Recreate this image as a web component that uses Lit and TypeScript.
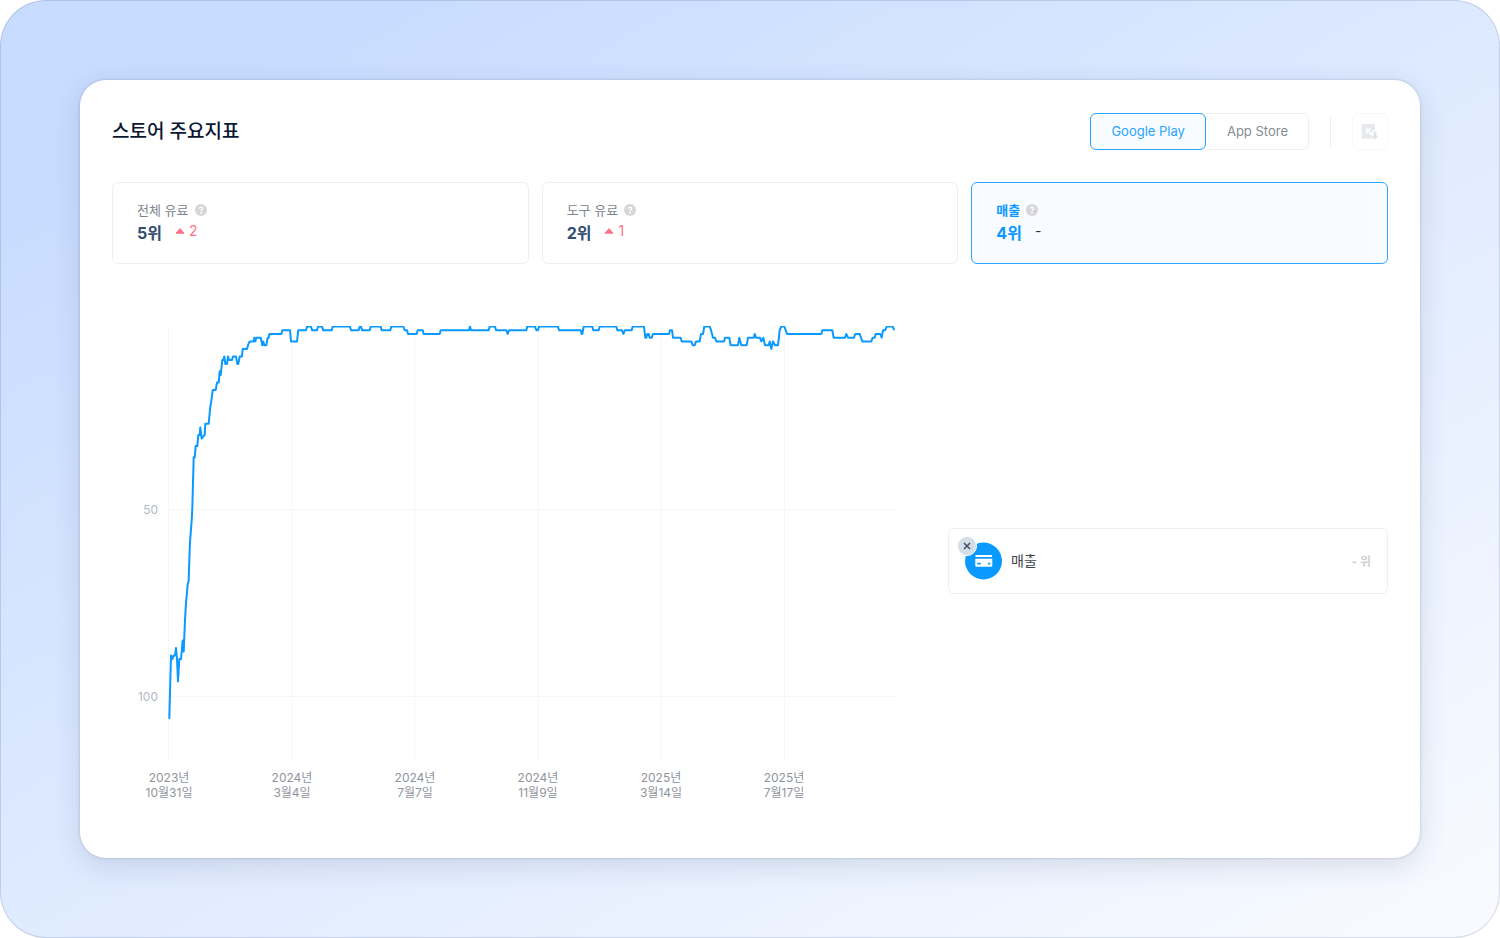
import { LitElement, html, css, svg, nothing } from "lit";
import { customElement, property, state } from "lit/decorators.js";
import { classMap } from "lit/directives/class-map.js";

interface Metric {
  id: string;
  label: string;
  rank: number;
  change: number;
}

const METRICS: Metric[] = [
  { id: "all-paid", label: "전체 유료", rank: 5, change: 2 },
  { id: "tool-paid", label: "도구 유료", rank: 2, change: 1 },
  { id: "revenue", label: "매출", rank: 4, change: 0 },
];

const TICKS = [
  ["2023년", "10월31일"],
  ["2024년", "3월4일"],
  ["2024년", "7월7일"],
  ["2024년", "11월9일"],
  ["2025년", "3월14일"],
  ["2025년", "7월17일"],
];

// Pairs of horizontal position on the time axis and store rank.
const SERIES: number[] = [
  1.3, 106, 3, 89, 4.3, 90, 5.7, 89, 7, 89, 8, 87, 9, 90, 10, 96, 11.3, 90, 13, 90, 14, 87, 14.7, 85,
  15.7, 88, 16.3, 84, 17, 79.5, 18, 75, 19.7, 70, 20.7, 69, 21, 66, 22, 58.6, 23.7, 52.8, 24.3, 49.7,
  25.7, 36, 26.7, 36, 27.7, 33, 29.3, 33, 30.3, 30, 31.7, 30, 32.3, 28, 33.7, 31, 35, 30.5, 36.7, 30,
  37.3, 27, 40.7, 27, 42.3, 22.5, 43.3, 21, 44.7, 18, 47.7, 18, 49, 16, 50.7, 16, 51.7, 13, 52.7, 14,
  54.3, 10, 55.3, 10, 56.3, 9, 57.3, 11, 59, 11, 60, 9, 61, 10, 64, 10, 65, 9, 68, 9, 69.3, 11,
  70.3, 11, 71.7, 9, 74, 9, 74.7, 7, 79, 7, 80, 6, 81.7, 5, 85.7, 5, 86.3, 4, 87.3, 5, 88.3, 4,
  92.7, 4, 94.3, 6, 95.3, 5, 96.3, 6, 98.3, 6, 99.7, 4, 100.7, 4, 101.3, 3, 113.3, 3, 114.3, 2,
  122, 2, 123, 5, 129, 5, 130.3, 2, 138, 2, 139, 1, 143, 1, 144, 2, 149, 2, 150, 1, 154, 1, 155, 2,
  163.7, 2, 164.7, 1, 182, 1, 183, 2, 190.7, 2, 191.7, 1, 193, 1, 194, 2, 201.7, 2, 202.7, 1,
  212.7, 1, 213.7, 2, 222.3, 2, 223.3, 1, 235.3, 1, 236.7, 2, 239, 2, 240, 3, 248.7, 3, 249.7, 2,
  254.7, 2, 255.7, 3, 271.7, 3, 272.7, 2, 301, 2, 302, 1, 303, 2, 320.7, 2, 321.7, 1, 327, 1,
  328, 2, 338.3, 2, 339.7, 3, 341, 2, 358.3, 2, 359.3, 1, 367, 1, 368.3, 2, 370, 2, 371, 1, 390, 1,
  391, 2, 412.7, 2, 413.7, 3, 414.3, 3, 415.7, 1, 424.3, 1, 425.3, 2, 430.7, 2, 431.7, 1, 448.3, 1,
  449.3, 2, 454, 2, 455.3, 3, 457, 2, 463.7, 2, 464.7, 1, 476, 1, 477.3, 4, 478.3, 4, 479.3, 3,
  480.7, 3, 481.7, 4, 483.7, 4, 485, 3, 501, 3, 502, 2, 504, 2, 505, 4, 512.7, 4, 513.7, 5,
  523.3, 5, 524.7, 6, 526.7, 6, 528, 5, 531.7, 5, 533, 3, 535, 3, 536.3, 1, 541.7, 1, 543, 2,
  545, 4, 547, 4, 548.3, 5, 556, 5, 557, 4, 561.3, 4, 562.7, 6, 570, 6, 571.3, 4, 573.3, 6,
  578.7, 6, 580, 4, 585.7, 4, 586.7, 3, 588, 4, 592, 4, 593.3, 5, 595.3, 4, 597, 6, 600.7, 6,
  601.7, 5, 603.3, 7, 605, 5, 607, 6, 610, 6, 611.7, 2, 613.3, 1, 616.3, 1, 617.7, 2, 619, 3,
  653.3, 3, 654.3, 2, 664.3, 2, 665.7, 4, 677, 4, 678.3, 3, 680, 4, 686, 4, 687.3, 3, 691.7, 3,
  694.3, 5, 703.3, 5, 704.7, 4, 706.7, 4, 707.7, 3, 712.3, 3, 713.7, 4, 715, 2, 717.3, 2, 718.7, 1,
  724.7, 1, 726.3, 2,
];

const PLOT_W = 727;
const PLOT_H = 434;
const TICK_STEP = 123.2;
const rankToY = (rank: number) => 0.5 + (rank - 1) * 3.737;

@customElement("rank-chart")
export class RankChart extends LitElement {
  static styles = css`
    :host {
      display: block;
    }
    .chart {
      display: grid;
      grid-template-columns: 46px minmax(0, 1fr);
      column-gap: 10px;
      row-gap: 10px;
    }
    .y-axis {
      display: grid;
      grid-template-rows: 183fr 187fr 64fr;
      justify-items: end;
      align-items: end;
      font-size: 12px;
      color: #b4b8bf;
    }
    .y-label {
      height: 0;
      display: flex;
      align-items: center;
    }
    .plot {
      display: block;
      width: 100%;
      height: 434px;
      overflow: hidden;
    }
    .grid-line {
      stroke: #f5f6f8;
      stroke-width: 1;
      vector-effect: non-scaling-stroke;
    }
    .series {
      fill: none;
      stroke: #0a99ff;
      stroke-width: 2;
      stroke-linejoin: round;
      vector-effect: non-scaling-stroke;
    }
    .x-axis {
      grid-column: 2;
      display: grid;
      grid-template-columns: repeat(5, 123fr) 112fr;
      margin: 0;
      padding: 0;
      list-style: none;
    }
    .x-slot {
      min-width: 0;
    }
    .x-label {
      width: 2px;
      display: flex;
      flex-direction: column;
      align-items: center;
      font-size: 12px;
      line-height: 15px;
      white-space: nowrap;
      color: #8f949e;
    }
  `;

  render() {
    let d = "";
    for (let i = 0; i < SERIES.length; i += 2) {
      d += `${i ? "L" : "M"}${SERIES[i]} ${rankToY(SERIES[i + 1]).toFixed(1)}`;
    }
    return html`
      <div class="chart">
        <div class="y-axis">
          <span class="y-label">50</span>
          <span class="y-label">100</span>
        </div>
        <svg
          class="plot"
          viewBox="0 0 ${PLOT_W} ${PLOT_H}"
          preserveAspectRatio="none"
          role="img"
          aria-label="매출"
        >
          ${TICKS.map((_, i) => {
            const x = 0.5 + i * TICK_STEP;
            return svg`<line class="grid-line" x1=${x} x2=${x} y1="1" y2=${PLOT_H}></line>`;
          })}
          ${[183.5, 370.5].map(
            (y) => svg`<line class="grid-line" x1="0" x2=${PLOT_W} y1=${y} y2=${y}></line>`
          )}
          <path class="series" d=${d}></path>
        </svg>
        <ul class="x-axis">
          ${TICKS.map(
            ([year, day]) => html`<li class="x-slot">
              <div class="x-label"><span>${year}</span><span>${day}</span></div>
            </li>`
          )}
        </ul>
      </div>
    `;
  }
}

@customElement("metric-card")
export class MetricCard extends LitElement {
  @property({ attribute: false }) metric!: Metric;
  @property({ type: Boolean }) selected = false;

  static styles = css`
    :host {
      display: block;
      min-width: 0;
    }
    .card {
      box-sizing: border-box;
      width: 100%;
      min-height: 82px;
      display: flex;
      flex-direction: column;
      gap: 1px;
      padding: 17px 24px 16px;
      border: 1px solid #eeeff1;
      border-radius: 6px;
      background: #fff;
      font: inherit;
      text-align: left;
      color: #80858f;
      cursor: pointer;
    }
    .selected {
      border-color: #2ba5fb;
      background: #f8fbff;
      color: #0a99ff;
    }
    .label-row {
      display: flex;
      align-items: center;
      gap: 6px;
      font-size: 13px;
      line-height: 20px;
    }
    .selected .label {
      font-weight: 700;
    }
    .help {
      width: 12px;
      height: 12px;
    }
    .value-row {
      display: flex;
      align-items: center;
      gap: 13px;
      line-height: 24px;
    }
    .rank {
      font-size: 16px;
      font-weight: 700;
      color: #344d73;
    }
    .selected .rank {
      color: #0a99ff;
    }
    .change {
      display: flex;
      align-items: center;
      gap: 4px;
      font-size: 14px;
      line-height: 20px;
      padding-bottom: 4px;
      color: #ff7286;
    }
    .flat {
      color: #333;
    }
    .arrow {
      width: 10px;
      height: 6px;
    }
  `;

  render() {
    const { label, rank, change } = this.metric;
    return html`
      <button
        type="button"
        class=${classMap({ card: true, selected: this.selected })}
        aria-pressed=${this.selected}
      >
        <span class="label-row">
          <span class="label">${label}</span>
          <svg class="help" viewBox="0 0 12 12" aria-hidden="true">
            <circle cx="6" cy="6" r="6" fill="#d6d6d6"></circle>
            <path
              d="M4.4 4.7C4.4 3.7 5.1 3.1 6 3.1S7.6 3.7 7.6 4.6C7.6 5.6 6 5.7 6 7"
              fill="none"
              stroke="#fff"
              stroke-width="1.3"
            ></path>
            <circle cx="6" cy="8.7" r="0.9" fill="#fff"></circle>
          </svg>
        </span>
        <span class="value-row">
          <span class="rank">${rank}위</span>
          ${change
            ? html`<span class="change">
                <svg class="arrow" viewBox="0 0 10 6" aria-hidden="true">
                  <path d="M5 0.6L9 5.2H1Z" fill="#ff7286" stroke="#ff7286" stroke-linejoin="round"></path>
                </svg>
                ${change}
              </span>`
            : html`<span class="change flat">-</span>`}
        </span>
      </button>
    `;
  }
}

@customElement("app-root")
export class AppRoot extends LitElement {
  @state() private store = "Google Play";
  @state() private selected = "revenue";
  @state() private legendShown = true;

  static styles = css`
    :host {
      display: block;
      font-family: Inter, "Noto Sans CJK KR", sans-serif;
      background: #fff;
    }
    .frame {
      box-sizing: border-box;
      min-height: 100vh;
      display: flex;
      padding: 79px;
      border: 1px solid rgba(60, 80, 120, 0.18);
      border-radius: 46px;
      background: linear-gradient(150deg, #c8dcff 12%, #deeaff 50%, #f8faff 98%);
      background-origin: border-box;
    }
    .panel {
      box-sizing: border-box;
      flex: 1;
      min-width: 0;
      display: flex;
      flex-direction: column;
      padding: 32px;
      border-radius: 26px;
      background: #fff;
      box-shadow: 0 0 2px 1px rgba(60, 80, 110, 0.14), 0 8px 28px rgba(40, 60, 90, 0.14);
    }
    .header {
      display: flex;
      align-items: center;
      justify-content: space-between;
      padding-top: 1px;
      margin-bottom: 32px;
    }
    .title {
      margin: 0;
      font-size: 19px;
      font-weight: 500;
      line-height: 28px;
      color: #0c1733;
    }
    .actions {
      display: flex;
      align-items: center;
      gap: 21px;
    }
    .tabs {
      display: flex;
    }
    .tab {
      box-sizing: border-box;
      height: 37px;
      padding: 0 20px 1px;
      border: 1px solid #eeeff1;
      background: #fff;
      font: inherit;
      font-size: 13px;
      color: #868b94;
      cursor: pointer;
    }
    .tab:first-child {
      border-radius: 6px 0 0 6px;
    }
    .tab:last-child {
      border-radius: 0 6px 6px 0;
    }
    .tab:not(.active):last-child {
      border-left-color: transparent;
    }
    .tab:not(.active):first-child {
      border-right-color: transparent;
    }
    .tab.active {
      border-color: #2ba5fb;
      border-radius: 6px;
      background: #f8fbff;
      color: #2ba5fb;
    }
    .divider {
      width: 1px;
      height: 30px;
      background: #eeeff1;
    }
    .export {
      box-sizing: border-box;
      width: 36px;
      height: 37px;
      display: grid;
      place-items: center;
      padding: 0;
      border: 1px solid #f8f8f9;
      border-radius: 6px;
      background: #fff;
    }
    .export-icon {
      width: 18px;
      height: 18px;
    }
    .metrics {
      display: grid;
      grid-template-columns: repeat(3, minmax(0, 1fr));
      gap: 13px;
    }
    .body {
      flex: 1;
      display: grid;
      grid-template-columns: minmax(0, 1fr) minmax(0, 440px);
      column-gap: 53px;
      padding-top: 32px;
    }
    .chart-area {
      padding: 30px 0 24px;
    }
    .legend {
      align-self: center;
      box-sizing: border-box;
      display: flex;
      align-items: center;
      gap: 8px;
      min-height: 66px;
      padding: 13px 16px;
      border: 1px solid #eeeff1;
      border-radius: 6px;
    }
    .badge {
      position: relative;
      width: 38px;
      height: 38px;
    }
    .badge-icon {
      display: block;
      width: 38px;
      height: 38px;
    }
    .remove {
      position: absolute;
      top: -6px;
      left: -8px;
      width: 20px;
      height: 20px;
      padding: 0;
      border: 1px solid #fff;
      border-radius: 50%;
      background: #d3dfe8;
      cursor: pointer;
    }
    .remove-icon {
      display: block;
      width: 18px;
      height: 18px;
    }
    .legend-name {
      flex: 1;
      padding-bottom: 2px;
      font-size: 14px;
      font-weight: 400;
      color: #3d424d;
    }
    .legend-rank {
      padding-bottom: 2px;
      font-size: 12px;
      font-weight: 700;
      color: #cfd1d4;
    }
  `;

  render() {
    return html`
      <div class="frame">
        <main class="panel">
          <header class="header">
            <h1 class="title">스토어 주요지표</h1>
            <div class="actions">
              <div class="tabs">
                ${["Google Play", "App Store"].map(
                  (name) => html`<button
                    type="button"
                    class=${classMap({ tab: true, active: this.store === name })}
                    aria-pressed=${this.store === name}
                    @click=${() => (this.store = name)}
                  >
                    ${name}
                  </button>`
                )}
              </div>
              <span class="divider"></span>
              <button type="button" class="export" disabled aria-label="Excel">
                <svg class="export-icon" viewBox="0 0 18 18" aria-hidden="true">
                  <path
                    d="M2 1H12.500Q14 1 14 2.500V7.500H10.800V10.300H8.200L12.500 15.500H2Q.6 15.500 .6 14V2.500Q.6 1 2 1Z"
                    fill="#e6e8eb"
                  ></path>
                  <path
                    d="M4.900 5.200L9.300 10.400M9.300 5.200L4.900 10.400"
                    stroke="#fff"
                    stroke-width="1.600"
                  ></path>
                  <path
                    d="M12.400 8.200H15.600V12.200H18L14 17.200L10 12.200H12.400Z"
                    fill="#dfe2e7"
                    stroke="#fff"
                    stroke-width=".6"
                  ></path>
                </svg>
              </button>
            </div>
          </header>
          <section class="metrics">
            ${METRICS.map(
              (metric) => html`<metric-card
                .metric=${metric}
                ?selected=${this.selected === metric.id}
                @click=${() => (this.selected = metric.id)}
              ></metric-card>`
            )}
          </section>
          <section class="body">
            <div class="chart-area"><rank-chart></rank-chart></div>
            ${this.legendShown
              ? html`<div class="legend">
                  <div class="badge">
                    <svg class="badge-icon" viewBox="0 0 38 38" aria-hidden="true">
                      <circle cx="18.500" cy="19" r="18.500" fill="#0a99ff"></circle>
                      <path d="M10.500 13H27V15H10.500Z" fill="#fff"></path>
                      <path
                        d="M10.300 16.700H27.300V23.500Q27.300 24.700 26.100 24.700H11.500Q10.300 24.700 10.300 23.500Z"
                        fill="#fff"
                      ></path>
                      <path d="M12.200 20.800H15.800V22.600H12.200ZM23 20.800H25.300V22.600H23Z" fill="#0a99ff"></path>
                    </svg>
                    <button
                      type="button"
                      class="remove"
                      aria-label="매출 삭제"
                      @click=${() => (this.legendShown = false)}
                    >
                      <svg class="remove-icon" viewBox="0 0 18 18" aria-hidden="true">
                        <path
                          d="M6 6L12 12M12 6L6 12"
                          stroke="#47525d"
                          stroke-width="1.600"
                        ></path>
                      </svg>
                    </button>
                  </div>
                  <span class="legend-name">매출</span>
                  <span class="legend-rank">- 위</span>
                </div>`
              : nothing}
          </section>
        </main>
      </div>
    `;
  }
}
